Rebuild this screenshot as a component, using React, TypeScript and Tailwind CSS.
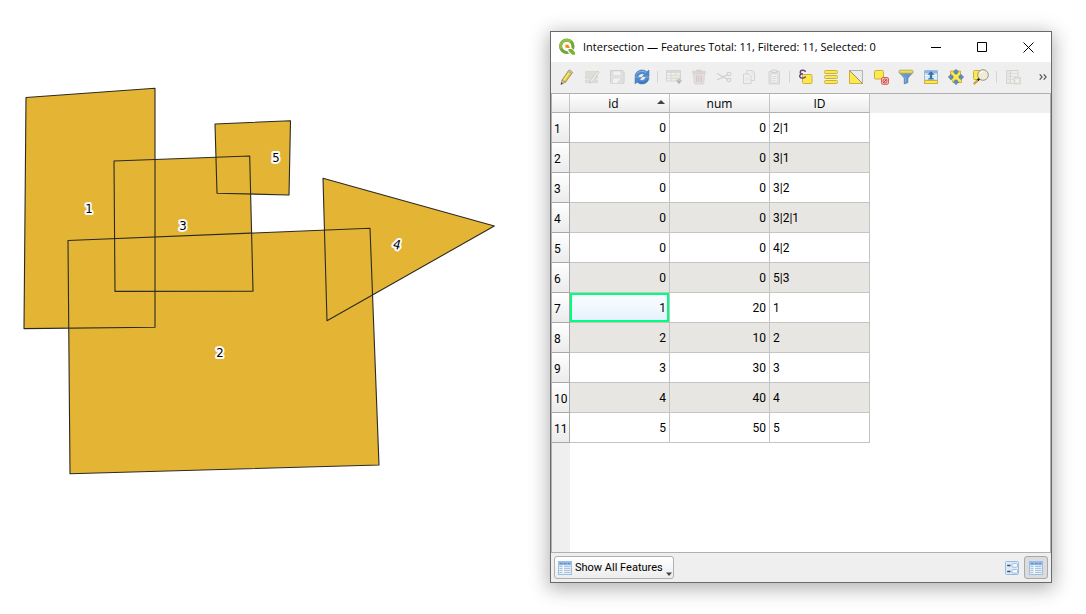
import React from "react";

type IconProps = { children: React.ReactNode; faded?: boolean };

function Icon({ children, faded }: IconProps) {
  return (
    <svg
      viewBox="0 0 16 16"
      aria-hidden="true"
      className={faded ? "size-4 opacity-30 grayscale-25" : "size-4"}
      fill="none"
    >
      {children}
    </svg>
  );
}

const pencil = (
  <>
    <path d="M9.700 1.300 13.600 3.500 6.600 13.200 3 11Z" fill="#dcc63c" stroke="#93823a" strokeWidth=".7" />
    <path d="M11 2.700 4.500 11.800" stroke="#f6ee9a" strokeWidth="1.200" />
    <path d="M9.700 1.300q2-1.600 3.900 2.200l-.9 1.200-3.900-2.200Z" fill="#cdbfae" stroke="#9d907c" strokeWidth=".5" />
    <path d="M3 11 6.600 13.200 2 15.500Z" fill="#dcc7a4" stroke="#7a6a4a" strokeWidth=".5" />
    <path d="M2.500 13.300 4 14.300 1.700 15.800Z" fill="#333" />
  </>
);

const editTable = (
  <>
    <path d="M1.500 2.500h12v2.700h-12zM1.500 6.700h12v2.700h-12zM1.500 11h12v2.700h-12z" fill="#c6baa0" stroke="#a89c84" strokeWidth=".8" />
    <path d="m13.500 2 1.700 1.200-6.700 9.500-2.700 1.500.7-3Z" fill="#f0ead8" stroke="#777" strokeWidth=".9" />
  </>
);

const save = (
  <>
    <path d="M1.500 1.500h11.700L15 3.200v10.300a1 1 0 0 1-1 1H2.500a1 1 0 0 1-1-1Z" fill="#c4c4c4" stroke="#888" />
    <path d="M4 2h8v4.500H4zM3.500 9h9v5.500h-9z" fill="#f6f6f6" stroke="#999" strokeWidth=".6" />
    <path d="m14.500 7.500 1 1-5 5-1.500.5.5-1.500Z" fill="#ddd" stroke="#777" strokeWidth=".6" />
  </>
);

const reload = (
  <>
    <path d="M1 7.600C1 3.500 4.300 1 8 1c2 0 3.600.6 4.800 1.800L15 1v6.600H8.300l2-2C8.600 4 5.300 4.400 4.300 7.600Z" fill="#4d8bcf" stroke="#3a73b3" strokeWidth=".5" />
    <path d="M15 8.400C15 12.500 11.700 15 8 15c-2 0-3.600-.6-4.800-1.800L1 15V8.400h6.700l-2 2c1.700 1.600 5 1.200 6-2Z" fill="#4d8bcf" stroke="#3a73b3" strokeWidth=".5" />
    <path d="M2.300 5.600C3.600 2.500 8.500 1 11.800 3.600" stroke="#93bde8" strokeWidth=".9" />
    <path d="M13.700 10.400c-1.300 3.100-6.200 4.600-9.500 2" stroke="#2c66a6" strokeWidth=".9" />
  </>
);

const addFeature = (
  <>
    <path d="M.5 1.500h14v10.500H.5z" fill="#f4f1e8" stroke="#9a9a8a" />
    <path d="M1 2h13v2H1z" fill="#aaa" />
    <path d="M.5 6.700h14M.5 9.300h14M5 3v9M10 3v9" stroke="#a8a090" strokeWidth=".8" />
    <path d="M5 6h9v3.500H5z" fill="#e6dba6" stroke="#999" strokeWidth=".6" />
    <path d="M10 11.500h6l-3 3.500Z" fill="#111" />
    <path d="M11.500 9.500h3v3h-3z" fill="#666" />
  </>
);

const trash = (
  <>
    <path d="M2.500 4.500h11l-.8 9.700a1 1 0 0 1-1 .8H4.300a1 1 0 0 1-1-.8Z" fill="#d6b6b6" stroke="#a67f7f" strokeWidth=".8" />
    <path d="M1.800 2.200h12.400v2.300H1.800zM5.500 1h5v1.200h-5z" fill="#c49c9c" stroke="#a67f7f" strokeWidth=".7" />
    <path d="M5.700 6.500v6.500M8 6.500v6.500M10.300 6.500v6.500" stroke="#8b6262" />
  </>
);

const scissors = (
  <>
    <path d="M1 4.500 11 10M1 11l10-5" stroke="#888" strokeWidth="1.200" />
    <ellipse cx="13" cy="5" rx="2" ry="1.600" stroke="#888" strokeWidth="1.100" />
    <ellipse cx="13" cy="11" rx="2" ry="1.600" stroke="#888" strokeWidth="1.100" />
  </>
);

const copy = (
  <>
    <path d="M6 1.500h5.500L13.500 3.500v8H6z" fill="#eee" stroke="#999" />
    <path d="M2.500 5H8l2 2v7.500H2.500z" fill="#f5f5f5" stroke="#999" />
    <path d="M4 9h4.500M4 11h4.500M11 2v2.500h2.500" stroke="#bbb" strokeWidth=".8" />
  </>
);

const paste = (
  <>
    <path d="M3 2.500h10.500v12.500H3z" fill="#c9c9c2" stroke="#999" />
    <path d="M5.700 1h5v2.500h-5z" fill="#ddd" stroke="#777" strokeWidth=".8" />
    <path d="M5 5h6.700v8.500H5z" fill="#f7f7f7" stroke="#999" strokeWidth=".6" />
    <path d="M6.500 7.500h4M6.500 9.500h4M6.500 11.500h3" stroke="#999" strokeWidth=".8" />
  </>
);

const selectExpression = (
  <>
    <rect x="4.500" y="5.500" width="9.500" height="9" rx="1" fill="#fce94f" stroke="#cbb040" />
    <path d="M7.300 2.200C5.500.6 2.200 1 2.200 3.200c0 1.300 1.200 1.700 2.800 1.700-2 0-3.300.7-3.300 2.200 0 2.400 3.800 2.600 5.700.8" stroke="#5f4570" strokeWidth="1.400" strokeLinecap="round" />
  </>
);

const selectAll = (
  <>
    <rect x="1.500" y="1.500" width="13" height="3" rx="1" fill="#fce94f" stroke="#cbb040" />
    <rect x="1.500" y="6.500" width="13" height="3" rx="1" fill="#fce94f" stroke="#cbb040" />
    <rect x="1.500" y="11.500" width="13" height="3" rx="1" fill="#fce94f" stroke="#cbb040" />
  </>
);

const invert = (
  <>
    <path d="M1.500 1.500h13v13Z" fill="#eaeaea" stroke="#b4b4b4" />
    <path d="M1.500 1.500v13h13Z" fill="#fce94f" stroke="#cbb040" />
    <path d="m1.500 1.500 13 13" stroke="#8c8c80" strokeWidth=".8" />
  </>
);

const deselect = (
  <>
    <rect x="1.500" y="1.500" width="9" height="8.500" rx="1" fill="#fce94f" stroke="#cbb040" />
    <rect x="8.500" y="8.500" width="7" height="6.800" rx="1.500" fill="#f1c4c4" stroke="#dc5a5a" />
    <path d="m10 14 4-4" stroke="#cf3a3a" strokeWidth="1" />
    <circle cx="12" cy="12" r="2" stroke="#d65050" strokeWidth=".9" />
  </>
);

const filter = (
  <>
    <path d="M1.300 3.500 6.300 9v5.800l3.500-1.200V9l5-5.500Z" fill="#6497cb" stroke="#4c78a8" strokeWidth=".8" />
    <path d="M3.300 4.800 7.400 9v4.500" stroke="#8fb6df" strokeWidth=".9" />
    <rect x="1" y="1.200" width="14" height="3" rx="1" fill="#f1e04c" stroke="#a9a060" strokeWidth=".8" />
  </>
);

const moveTop = (
  <>
    <path d="M1.500 1.500h13v13h-13z" fill="#cfe0f3" stroke="#9dbbdc" />
    <path d="M2 2h12v2.200H2z" fill="#8fb4de" />
    <path d="M2 6.500h12M2 9h12" stroke="#fff" strokeWidth="1" />
    <path d="M1.500 11.500h13v3h-13z" fill="#fce94f" stroke="#cbb040" />
    <path d="M8 2.300 11.600 5.800H9.200v3.400h1.600v1.300H5.200V9.200h1.600V5.800H4.400Z" fill="#3672b0" />
  </>
);

const pan = (
  <>
    <path d="M2.500 2h10v4l1 1v6.500H5l-1-3H2.500z" fill="#fce94f" stroke="#cbb040" />
    <path d="m8 .3 2.700 2.900H9.200V5H6.800V3.200H5.300ZM8 15.700l2.700-2.900H9.200V11H6.800v1.800H5.300ZM.3 8l2.900-2.700v1.500H5v2.400H3.200v1.500ZM15.700 8l-2.900-2.700v1.500H11v2.400h1.800v1.500Z" fill="#5f8fc2" stroke="#48709c" strokeWidth=".6" />
  </>
);

const zoomSelected = (
  <>
    <rect x=".5" y="1.500" width="8" height="9" rx="1" fill="#fce94f" stroke="#cbb040" />
    <circle cx="10" cy="6" r="5.300" fill="#f1ecd5" fillOpacity=".92" stroke="#97978f" />
    <path d="M7 4.500q1-2 3.400-2" stroke="#fff" strokeWidth="1.200" />
    <path d="M5.500 10.500.8 15" stroke="#b4862a" strokeWidth="2.200" />
    <path d="M5 10.800.8 14.800" stroke="#f3c443" strokeWidth="1" />
    <path d="m6.300 9.700-1.600 1.500" stroke="#222" strokeWidth="2.200" />
  </>
);

const newField = (
  <>
    <path d="M1.500 1.500h4v13h-4z" fill="#e2deb8" stroke="#999" />
    <path d="M5.500 1.500h7.500v13H5.500z" fill="#eee" stroke="#999" />
    <path d="M1 4.500h12M1 7.500h12M1 10.500h12" stroke="#aaa" strokeWidth=".8" />
    <rect x="8.500" y="8" width="7.500" height="7.500" rx="1" fill="#a8a488" />
    <path d="M12.200 9v5.500M9.800 10.300l4.800 3M9.800 13.300l4.800-3" stroke="#fff" strokeWidth="1.100" />
  </>
);

const tableIcon = (
  <>
    <rect x="1.500" y="1.500" width="13" height="13" fill="#e6eff8" stroke="#9dbfe2" />
    <path d="M2 2h12v3.200H2z" fill="#8db9e6" />
    <path d="M3 3.600h2.500M7 3.600h2.500M11 3.600h2" stroke="#5a8dc2" strokeWidth="1" />
    <path d="M2.500 6.500h3M7 6.500h6.500M2.500 8.500h3M7 8.500h6.500M2.500 10.500h3M7 10.500h6.500M2.500 12.500h3M7 12.500h6.500" stroke="#abc3dc" strokeWidth="1" />
    <path d="M6.300 5v9" stroke="#fff" strokeWidth=".8" />
  </>
);

const formIcon = (
  <>
    <rect x="1.500" y="1.500" width="13" height="13" rx="1" fill="#dfeaf6" stroke="#96bce2" />
    <path d="M3.200 5.500h3.300M3.200 11.500h3.300" stroke="#34506e" strokeWidth="1.300" />
    <rect x="8" y="3.700" width="5.500" height="3.400" rx=".8" fill="#fff" stroke="#96bce2" />
    <rect x="8" y="9.700" width="5.500" height="3.400" rx=".8" fill="#fff" stroke="#96bce2" />
  </>
);

type Tool = { label: string; art: React.ReactNode; faded?: boolean };

const toolGroups: Tool[][] = [
  [
    { label: "Toggle editing", art: pencil },
    { label: "Multi edit", art: editTable, faded: true },
    { label: "Save edits", art: save, faded: true },
    { label: "Reload table", art: reload },
  ],
  [
    { label: "Add feature", art: addFeature, faded: true },
    { label: "Delete selected", art: trash, faded: true },
    { label: "Cut", art: scissors, faded: true },
    { label: "Copy", art: copy, faded: true },
    { label: "Paste", art: paste, faded: true },
  ],
  [
    { label: "Select by expression", art: selectExpression },
    { label: "Select all", art: selectAll },
    { label: "Invert selection", art: invert },
    { label: "Deselect all", art: deselect },
    { label: "Filter", art: filter },
    { label: "Move selection to top", art: moveTop },
    { label: "Pan to selection", art: pan },
    { label: "Zoom to selection", art: zoomSelected },
  ],
  [{ label: "New field", art: newField, faded: true }],
];

const rows: [number, number, string][] = [
  [0, 0, "2|1"],
  [0, 0, "3|1"],
  [0, 0, "3|2"],
  [0, 0, "3|2|1"],
  [0, 0, "4|2"],
  [0, 0, "5|3"],
  [1, 20, "1"],
  [2, 10, "2"],
  [3, 30, "3"],
  [4, 40, "4"],
  [5, 50, "5"],
];

const shapes = [
  "26,97.500 155,88.300 155,327.300 24,328.600",
  "68,240.500 370,228.300 379,465 70,473.700",
  "114,161 249.700,156 253,291.200 115,291.400",
  "323,178.300 494.300,226 327,320.700",
  "215,124 290.500,120.700 289,195 217,193.200",
];

const mapLabels = [
  { text: "1", x: 89, y: 213, turn: 0 },
  { text: "2", x: 220, y: 357, turn: 0 },
  { text: "3", x: 183, y: 230, turn: 0 },
  { text: "4", x: 397, y: 249, turn: 15 },
  { text: "5", x: 276, y: 162, turn: 0 },
];

function MapCanvas() {
  return (
    <svg viewBox="0 0 550 614" className="w-full" role="img" aria-label="Polygon layer">
      {shapes.map((points) => (
        <polygon key={points} points={points} fill="#e4b535" />
      ))}
      {shapes.map((points) => (
        <polygon key={points} points={points} fill="none" stroke="#2b2922" strokeWidth="1.100" strokeLinejoin="round" />
      ))}
      {mapLabels.map((l) => (
        <text
          key={l.text}
          x={l.x}
          y={l.y}
          textAnchor="middle"
          transform={`rotate(${l.turn} ${l.x} ${l.y - 4})`}
          className="fill-black stroke-[#fafafa] stroke-4 font-['DejaVu_Sans_Condensed','DejaVu_Sans',sans-serif] text-[13px] [paint-order:stroke] [stroke-linejoin:round]"
        >
          {l.text}
        </text>
      ))}
    </svg>
  );
}

function Logo() {
  return (
    <svg viewBox="0 0 18 18" className="size-[18px]" aria-hidden="true" fill="none">
      <circle cx="8.800" cy="8.300" r="6.200" stroke="#6fa636" strokeWidth="3.200" />
      <path d="M3 10.500A6.200 6.200 0 0 1 13 3.800" stroke="#93c04a" strokeWidth="2.400" />
      <path d="M8 8.500h4.500L18 14.500V18h-4.500L8.500 12.500Z" fill="#fff" />
      <path d="M10.500 11h3.300l3.200 3.200v2.500h-2.700L10.500 13Z" fill="#7cb136" />
      <circle cx="8.500" cy="8" r="2.300" fill="#fbdf9a" />
      <path d="M7.700 7h2.500l1.800 2.500-2 .8-2.300-1Z" fill="#ee8a25" />
    </svg>
  );
}

const captionButton = "flex w-[46px] items-center justify-center";

function TitleBar() {
  return (
    <header className="flex h-[30px] shrink-0 items-stretch bg-white">
      <div className="flex min-w-0 flex-1 items-center gap-[7px] pl-[7px]">
        <Logo />
        <h1 className="truncate text-[11px]">Intersection — Features Total: 11, Filtered: 11, Selected: 0</h1>
      </div>
      <button type="button" aria-label="Minimize" className={captionButton}>
        <svg viewBox="0 0 11 11" className="size-[11px]" stroke="#000"><path d="M0 5.500h10" /></svg>
      </button>
      <button type="button" aria-label="Maximize" className={captionButton}>
        <svg viewBox="0 0 11 11" className="size-[11px]" stroke="#000" fill="none"><path d="M.5.5h9v9h-9z" /></svg>
      </button>
      <button type="button" aria-label="Close" className={captionButton}>
        <svg viewBox="0 0 11 11" className="size-[11px]" stroke="#000"><path d="m.5.5 10 10M10.500.5l-10 10" /></svg>
      </button>
    </header>
  );
}

function Toolbar() {
  return (
    <div role="toolbar" aria-label="Attribute table tools" className="flex h-[31px] shrink-0 items-center pr-1 pb-0.5 pl-[3px]">
      {toolGroups.map((group, i) => (
        <React.Fragment key={group[0].label}>
          {i > 0 && (
            <span className="flex w-[7px] justify-center">
              <span className="h-3 w-px bg-[#d6d6d6]" />
            </span>
          )}
          {group.map((t) => (
            <button key={t.label} type="button" aria-label={t.label} disabled={t.faded} className="flex h-6 w-[25px] items-center justify-center">
              <Icon faded={t.faded}>{t.art}</Icon>
            </button>
          ))}
        </React.Fragment>
      ))}
      <button type="button" aria-label="More tools" className="ml-auto flex h-6 w-2 items-center justify-center">
        <svg viewBox="0 0 8 8" className="size-2 shrink-0" fill="none" stroke="#444" strokeWidth="1.100">
          <path d="m.7 1.300 2.400 2.700L.7 6.700M4.700 1.300l2.400 2.700-2.400 2.700" />
        </svg>
      </button>
    </div>
  );
}

const headCell =
  "h-[19px] border-r border-b border-r-[#c4c4c4] border-b-[#b0b0b0] bg-linear-to-b from-white to-[#ebebeb] p-0 pt-0.5 text-center font-normal";

function AttributeTable() {
  return (
    <div className="flex flex-1 flex-col border border-[#b0b0b0] bg-white bg-[linear-gradient(to_right,#efefef_18px,transparent_18px)]">
      <div className="bg-[linear-gradient(to_bottom,#efefef_19px,transparent_19px)]">
        <table className="table-fixed border-separate border-spacing-0">
          <colgroup>
            <col className="w-[18px]" />
            <col className="w-[100px]" />
            <col className="w-[100px]" />
            <col className="w-[100px]" />
          </colgroup>
          <thead className="leading-4">
            <tr>
              <td className="border-r border-b border-r-[#c4c4c4] border-b-[#b0b0b0] bg-linear-to-b from-white to-[#ebebeb] p-0" />
              <th scope="col" aria-sort="ascending" className={headCell}>
                <div className="grid grid-cols-[1fr_auto_1fr] items-center">
                  <span className="col-start-2 pr-3">id</span>
                  <svg viewBox="0 0 8 4" className="mr-1 mb-1 h-1 w-2 justify-self-end" aria-hidden="true">
                    <path d="m0 4 4-4 4 4Z" fill="#444" />
                  </svg>
                </div>
              </th>
              <th scope="col" className={headCell}>num</th>
              <th scope="col" className={headCell}>ID</th>
            </tr>
          </thead>
          <tbody className="font-[Roboto,'Open_Sans',sans-serif]">
            {rows.map(([id, num, joined], i) => {
              const cell = "h-[30px] border-r border-b border-[#c4c4c4] py-0";
              return (
                <tr key={i} className="bg-white even:bg-[#e8e6e2]">
                  <th scope="row" className="h-[30px] border-r border-b border-[#a8a8a8] bg-linear-to-b from-white to-[#ebebeb] p-0 pt-0.5 pl-0.5 text-left font-normal">
                    {i + 1}
                  </th>
                  {id === 1 ? (
                    <td className="h-[30px] border-r border-b border-[#c4c4c4] p-0">
                      <div className="flex h-[29px] items-center justify-end border-2 border-[#00ff7f] bg-linear-to-b from-[#fafcff] to-[#e6f3fd] pr-px">
                        {id}
                      </div>
                    </td>
                  ) : (
                    <td className={`${cell} pr-[3px] text-right`}>{id}</td>
                  )}
                  <td className={`${cell} pr-[3px] text-right`}>{num}</td>
                  <td className={`${cell} pl-[3px]`}>{joined}</td>
                </tr>
              );
            })}
          </tbody>
        </table>
      </div>
    </div>
  );
}

function StatusBar() {
  return (
    <footer className="flex h-[29px] shrink-0 items-center justify-between px-[3px]">
      <button type="button" className="flex h-[23px] w-[120px] items-center gap-0.5 rounded-[3px] border border-[#b0b0b0] bg-linear-to-b from-white to-[#ececec] pl-0.5 text-[11px]">
        <Icon>{tableIcon}</Icon>
        <span className="font-[Roboto,'Open_Sans',sans-serif] whitespace-nowrap">Show All Features</span>
        <svg viewBox="0 0 6 4" className="mr-px mb-0.5 ml-auto h-1 w-1.5 self-end" aria-hidden="true">
          <path d="M0 .5h6L3 4Z" fill="#444" />
        </svg>
      </button>
      <div className="flex">
        <button type="button" aria-label="Form view" className="flex h-[23px] w-6 items-center justify-center">
          <Icon>{formIcon}</Icon>
        </button>
        <button type="button" aria-label="Table view" aria-pressed="true" className="flex h-[23px] w-6 items-center justify-center rounded-[3px] border border-[#aaa] bg-[#dcdcdc]">
          <Icon>{tableIcon}</Icon>
        </button>
      </div>
    </footer>
  );
}

export default function App() {
  return (
    <main className="grid min-h-screen grid-cols-[minmax(0,550fr)_minmax(0,536fr)] bg-white font-['Open_Sans','Noto_Sans',sans-serif] text-[12px] leading-4 text-black">
      <MapCanvas />
      <div className="flex py-[31px] pr-[34px]">
        <section className="flex min-w-0 flex-1 flex-col border border-[#6a6a6a] bg-[#efefef] shadow-[0_4px_18px_2px_rgba(0,0,0,0.3)]">
          <TitleBar />
          <Toolbar />
          <AttributeTable />
          <StatusBar />
        </section>
      </div>
    </main>
  );
}
